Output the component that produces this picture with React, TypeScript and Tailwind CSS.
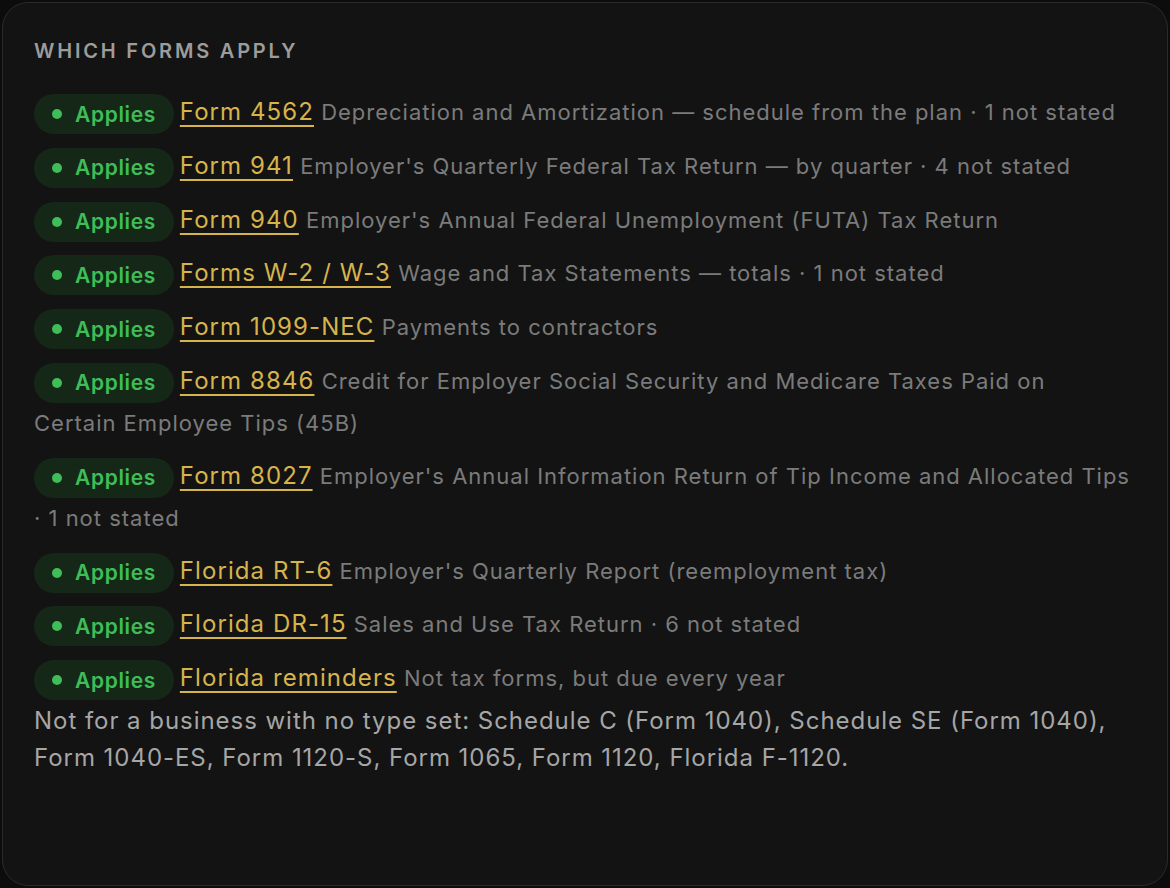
import React from 'react';

type Row = { form: string; desc: string; extra?: string };

const rows: Row[] = [
  { form: 'Form 4562', desc: 'Depreciation and Amortization — schedule from the plan', extra: '1 not stated' },
  { form: 'Form 941', desc: "Employer's Quarterly Federal Tax Return — by quarter", extra: '4 not stated' },
  { form: 'Form 940', desc: "Employer's Annual Federal Unemployment (FUTA) Tax Return" },
  { form: 'Forms W-2 / W-3', desc: 'Wage and Tax Statements — totals', extra: '1 not stated' },
  { form: 'Form 1099-NEC', desc: 'Payments to contractors' },
  { form: 'Form 8846', desc: 'Credit for Employer Social Security and Medicare Taxes Paid on Certain Employee Tips (45B)' },
  { form: 'Form 8027', desc: "Employer's Annual Information Return of Tip Income and Allocated Tips", extra: '1 not stated' },
  { form: 'Florida RT-6', desc: "Employer's Quarterly Report (reemployment tax)" },
  { form: 'Florida DR-15', desc: 'Sales and Use Tax Return', extra: '6 not stated' },
  { form: 'Florida reminders', desc: 'Not tax forms, but due every year' },
];

function AppliesPill() {
  return (
    <span className="inline-flex items-center gap-[13px] h-[40px] pl-[18px] pr-[18px] mr-[6px] rounded-full bg-[#152817] align-middle leading-none">
      <span className="w-[10px] h-[10px] rounded-full bg-[#3ebd58]" />
      <span className="text-[21px] font-semibold text-[#3ebd58] tracking-[0.03em]">Applies</span>
    </span>
  );
}

export default function App() {
  return (
    <div
      className="min-h-screen bg-[#0c0c0c] p-[2px]"
      style={{ fontFamily: 'Inter, "Noto Sans", sans-serif' }}
    >
      <div className="h-[884px] rounded-[26px] border border-[#2a2a2a] bg-[#131313] pl-[31px] pr-[37px] pt-[33px]">
        <h2 className="text-[20px] leading-[30px] font-semibold tracking-[0.14em] text-[#9c9c9c] mb-[25px]">
          WHICH FORMS APPLY
        </h2>

        <div className="flex flex-col gap-[10.8px]">
          {rows.map((r) => (
            <div key={r.form} className="text-[22px] leading-[41px] tracking-[0.045em]">
              <AppliesPill />
              <a
                href="#"
                className="text-[24px] tracking-[0.045em] text-[#d6b44c] underline decoration-[1.5px] underline-offset-[5px]"
              >
                {r.form}
              </a>{' '}
              <span className="text-[#7b7b7b]">
                {r.desc}
                {r.extra && <> · {r.extra}</>}
              </span>
            </div>
          ))}
        </div>
        <p className="mt-[2px] text-[24px] leading-[37px] tracking-[0.04em] text-[#a6a6a6]">
          Not for a business with no type set: Schedule C (Form 1040), Schedule SE (Form 1040), Form 1040-ES, Form
          1120-S, Form 1065, Form 1120, Florida F-1120.
        </p>
      </div>
    </div>
  );
}
